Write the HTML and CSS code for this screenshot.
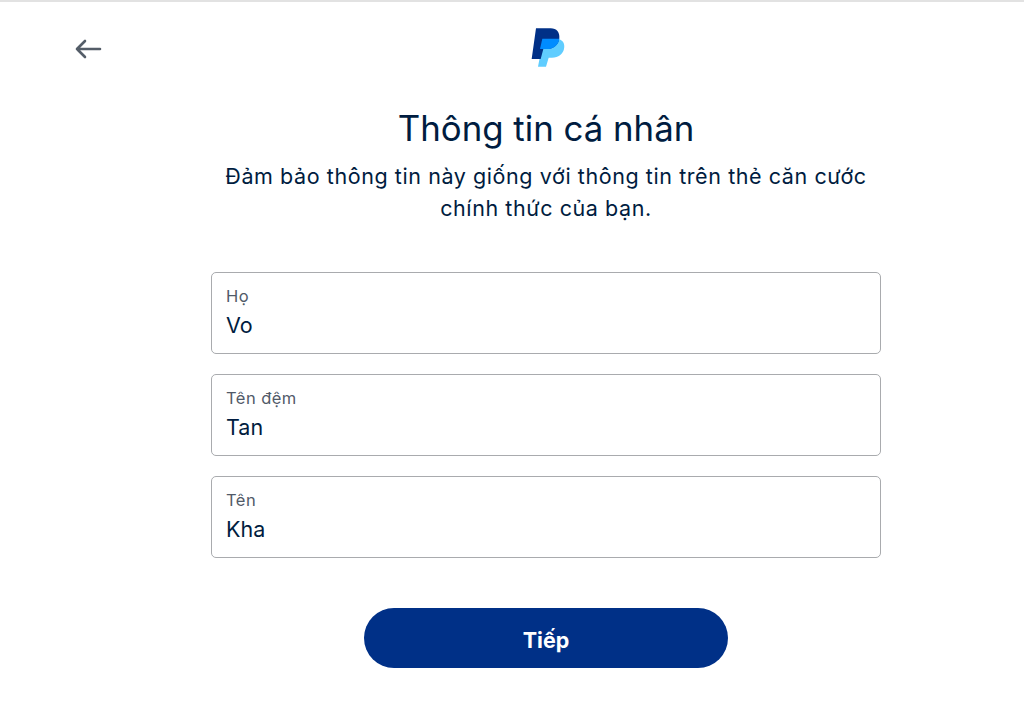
FILE: index.html

```html
<!DOCTYPE html>
<html lang="vi">
<head>
    <meta charset="UTF-8">
    <meta name="viewport" content="width=device-width, initial-scale=1.0">
    <title>Thông tin cá nhân</title>
    <link rel="stylesheet" href="styles.css">
</head>
<body>
    <div class="page">
        <header class="top-bar">
            <a class="back-link" href="#" aria-label="Back">
                <svg width="28" height="20" viewBox="0 0 28 20" fill="none" stroke="#545d68" stroke-width="2.6" stroke-linecap="round" stroke-linejoin="round">
                    <path d="M26 10H3M11 2L3 10L11 18"/>
                </svg>
            </a>
            <svg class="logo" width="36" height="42" viewBox="60 36 108 126">
                <path fill="#60cdff" d="M100 72H140C157 72 166 85 162 102C158 118 146 128 126 128H116L108 155H84Z"/>
                <path fill="#003087" d="M78 40H122C140 40 150 52 148 70C146 90 130 102 112 102H100L92 132H65Z"/>
                <path fill="#008cff" d="M97 71H148C146 90 130 102 112 102H90Z"/>
            </svg>
        </header>
        <main class="content">
            <h1 class="title">Thông tin cá nhân</h1>
            <p class="subtitle">Đảm bảo thông tin này giống với thông tin trên thẻ căn cước<br>chính thức của bạn.</p>
            <form class="name-form">
                <div class="field">
                    <label class="field-label">Họ</label>
                    <div class="field-value">Vo</div>
                </div>
                <div class="field">
                    <label class="field-label">Tên đệm</label>
                    <div class="field-value">Tan</div>
                </div>
                <div class="field">
                    <label class="field-label">Tên</label>
                    <div class="field-value">Kha</div>
                </div>
                <button class="next-btn" type="button">Tiếp</button>
            </form>
        </main>
    </div>
</body>
</html>
```

FILE: styles.css

```css
body {
    font-family: Inter, "Liberation Sans", sans-serif;
    background-color: #fff;
    color: #001c40;
    margin: 0;
}
.page {
    height: 719px;
    border-top: 2px solid #e2e2e2;
    overflow: hidden;
}
.top-bar {
    position: relative;
    display: flex;
    justify-content: center;
    padding: 25px 0 0 72px;
    height: 62px;
}
.back-link {
    position: absolute;
    left: 74px;
    top: 37px;
    line-height: 0;
}
.logo {
    display: block;
}
.content {
    margin-left: 68px;
    display: flex;
    flex-direction: column;
    align-items: center;
}
.title {
    font-size: 34.800px;
    line-height: 44px;
    font-weight: 400;
    margin: 17px 0 0;
}
.subtitle {
    font-size: 21.500px;
    line-height: 32px;
    letter-spacing: 0.580px;
    text-align: center;
    margin: 10px 0 0;
}
.name-form {
    width: 670px;
    margin-top: 48px;
    display: flex;
    flex-direction: column;
    gap: 20px;
}
.field {
    height: 82px;
    box-sizing: border-box;
    border: 1px solid #a9abae;
    border-radius: 5px;
    padding: 13px 14px 0;
}
.field-label {
    display: block;
    font-size: 16.500px;
    line-height: 20px;
    letter-spacing: 0.450px;
    color: #515a68;
}
.field-value {
    font-size: 21.500px;
    line-height: 30px;
    margin-top: 4px;
}
.next-btn {
    align-self: center;
    width: 364px;
    height: 60px;
    margin-top: 30px;
    padding: 3px 0 0;
    border: 0;
    border-radius: 30px;
    background: #003087;
    color: #fff;
    font-family: inherit;
    font-size: 21.500px;
    font-weight: 700;
}
```
